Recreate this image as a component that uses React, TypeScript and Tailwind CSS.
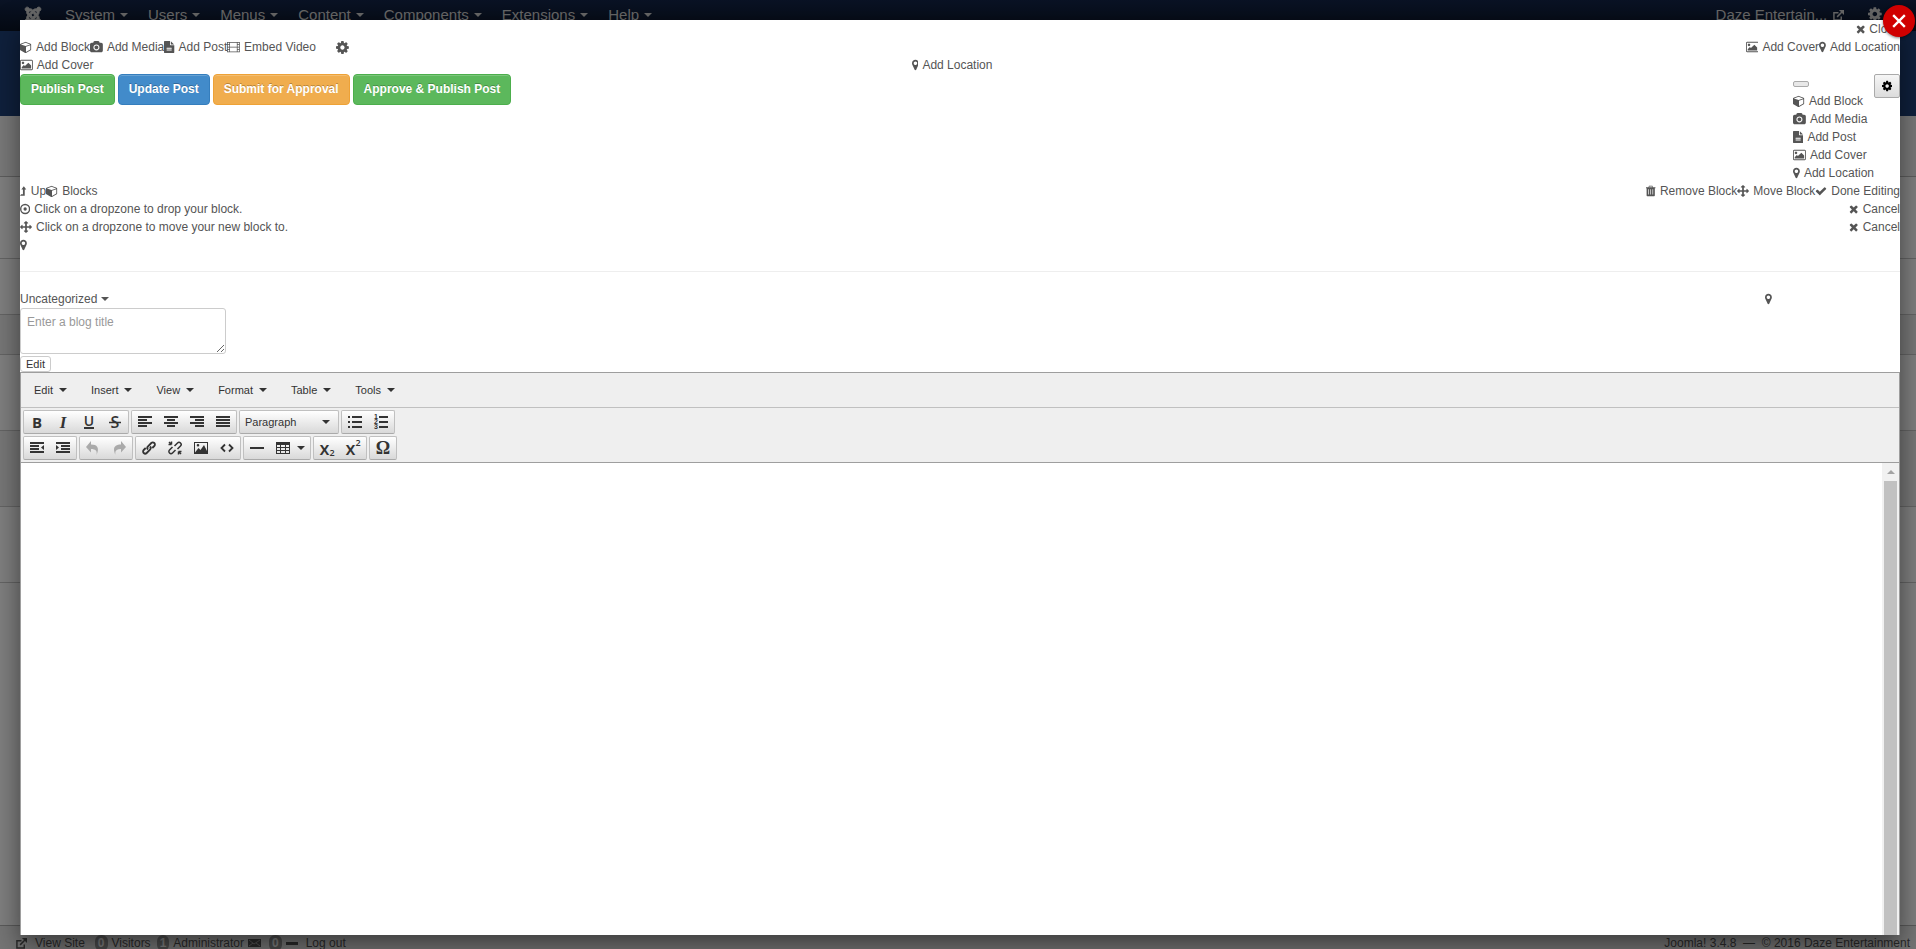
import type { ReactNode } from 'react';
import { FaJoomla } from 'react-icons/fa';

const glyphs = {
  cube: {
    box: '0 0 1792 1792',
    d: 'M896 1629l640-349v-636l-640 233v752zm-64-865l698-254-698-254-698 254zm832-252v768q0 35-18 65t-49 47l-704 384q-28 16-61 16t-61-16l-704-384q-31-17-49-47t-18-65v-768q0-40 23-73t61-47l704-256q22-8 44-8t44 8l704 256q38 14 61 47t23 73z',
  },
  camera: {
    box: '0 0 1920 1792',
    d: 'M960 672q119 0 203.500 84.500t84.500 203.500-84.500 203.500-203.500 84.500-203.500-84.500-84.500-203.500 84.500-203.500 203.500-84.500zm704-416q106 0 181 75t75 181v896q0 106-75 181t-181 75h-1408q-106 0-181-75t-75-181v-896q0-106 75-181t181-75h224l51-136q19-49 69.500-84.500t103.500-35.500h512q53 0 103.500 35.500t69.500 84.500l51 136h224zm-704 1152q185 0 316.500-131.500t131.500-316.500-131.500-316.500-316.500-131.500-316.500 131.500-131.500 316.500 131.500 316.500 316.500 131.500z',
  },
  file: {
    box: '128 0 1536 1792',
    d: 'M1596 476q14 14 28 36h-472v-472q22 14 36 28zm-476 164h544v1056q0 40-28 68t-68 28h-1344q-40 0-68-28t-28-68v-1600q0-40 28-68t68-28h800v544q0 40 28 68t68 28zm160 736v-64q0-14-9-23t-23-9h-704q-14 0-23 9t-9 23v64q0 14 9 23t23 9h704q14 0 23-9t9-23zm0-256v-64q0-14-9-23t-23-9h-704q-14 0-23 9t-9 23v64q0 14 9 23t23 9h704q14 0 23-9t9-23z',
  },
  film: {
    box: '0 0 1920 1792',
    d: 'M0 160h1920v1536h-1920zM110 270v210h230v-210zM110 600v260h230v-260zM110 980v260h230v-260zM110 1360v220h230v-220zM450 270v590h1020v-590zM450 980v600h1020v-600zM1580 270v210h230v-210zM1580 600v260h230v-260zM1580 980v260h230v-260zM1580 1360v220h230v-220z',
  },
  picture: {
    box: '0 0 1920 1792',
    d: 'M640 576q0 80-56 136t-136 56-136-56-56-136 56-136 136-56 136 56 56 136zm1024 384v448h-1408v-192l320-320 160 160 512-512zm96-704h-1600q-13 0-22.500 9.500t-9.500 22.500v1216q0 13 9.500 22.500t22.500 9.500h1600q13 0 22.500-9.500t9.500-22.500v-1216q0-13-9.500-22.500t-22.500-9.500zm160 32v1216q0 66-47 113t-113 47h-1600q-66 0-113-47t-47-113v-1216q0-66 47-113t113-47h1600q66 0 113 47t47 113z',
  },
  marker: {
    box: '384 0 1024 1792',
    d: 'M1152 640q0-106-75-181t-181-75-181 75-75 181 75 181 181 75 181-75 75-181zm256 0q0 109-33 179l-364 774q-16 33-47.500 52t-67.500 19-67.500-19-46.500-52l-365-774q-33-70-33-179 0-212 150-362t362-150 362 150 150 362z',
  },
  gear: {
    box: '128 0 1536 1792',
    d: 'M1152 896q0-106-75-181t-181-75-181 75-75 181 75 181 181 75 181-75 75-181zm512-109v222q0 12-8 23t-20 13l-185 28q-19 54-39 91 35 50 107 138 10 12 10 25t-9 23q-27 37-99 108t-94 71q-12 0-26-9l-138-108q-44 23-91 38-16 136-29 186-7 28-36 28h-222q-14 0-24.500-8.500t-11.500-21.500l-28-184q-49-16-90-37l-141 107q-10 9-25 9-14 0-25-11-126-114-165-168-7-10-7-23 0-12 8-23 15-21 51-66.500t54-70.500q-27-50-41-99l-183-27q-13-2-21-12.500t-8-23.500v-222q0-12 8-23t19-13l186-28q14-46 39-92-40-57-107-138-10-12-10-24 0-10 9-23 26-36 98.500-107.500t94.500-71.500q13 0 26 10l138 107q44-23 91-38 16-136 29-186 7-28 36-28h222q14 0 24.500 8.500t11.500 21.500l28 184q49 16 90 37l142-107q9-9 24-9 13 0 25 10 129 119 165 170 7 8 7 22 0 12-8 23-15 21-51 66.500t-54 70.500q26 50 41 98l183 28q13 2 21 12.500t8 23.500z',
  },
  times: {
    box: '192 0 1408 1792',
    d: 'M1490 1322q0 40-28 68l-136 136q-28 28-68 28t-68-28l-294-294-294 294q-28 28-68 28t-68-28l-136-136q-28-28-28-68t28-68l294-294-294-294q-28-28-28-68t28-68l136-136q28-28 68-28t68 28l294 294 294-294q28-28 68-28t68 28l136 136q28 28 28 68t-28 68l-294 294 294 294q28 28 28 68z',
  },
  check: {
    box: '0 0 1792 1792',
    d: 'M1671 566q0 40-28 68l-724 724-136 136q-28 28-68 28t-68-28l-136-136-362-362q-28-28-28-68t28-68l136-136q28-28 68-28t68 28l294 295 656-657q28-28 68-28t68 28l136 136q28 28 28 68z',
  },
  arrows: {
    box: '0 0 1792 1792',
    d: 'M1792 896q0 26-19 45l-256 256q-19 19-45 19t-45-19-19-45v-128h-384v384h128q26 0 45 19t19 45-19 45l-256 256q-19 19-45 19t-45-19l-256-256q-19-19-19-45t19-45 45-19h128v-384h-384v128q0 26-19 45t-45 19-45-19l-256-256q-19-19-19-45t19-45l256-256q19-19 45-19t45 19 19 45v128h384v-384h-128q-26 0-45-19t-19-45 19-45l256-256q19-19 45-19t45 19l256 256q19 19 19 45t-19 45-45 19h-128v384h384v-128q0-26 19-45t45-19 45 19l256 256q19 19 19 45z',
  },
  trash: {
    box: '192 0 1408 1792',
    d: 'M640 128h512l80 200h368v150h-90v1100q0 90-110 90h-1008q-110 0-110-90v-1100h-90v-150h368zM700 230l-40 98h472l-40-98zM530 620h100v800h-100zM845 620h100v800h-100zM1160 620h100v800h-100z',
  },
  up: {
    box: '0 0 1024 1792',
    d: 'M0 1600l170-210h270v-710h-240l370-500 370 500h-230v920z',
  },
  target: {
    box: '128 0 1536 1792',
    d: 'M896 128a768 768 0 1 0 0 1536a768 768 0 1 0 0-1536zM896 340a556 556 0 1 1 0 1112a556 556 0 1 1 0-1112zM896 650a246 246 0 1 0 0 492a246 246 0 1 0 0-492z',
  },
};

type GlyphName = keyof typeof glyphs;

function Glyph({ name, className = 'h-3' }: { name: GlyphName; className?: string }) {
  const { box, d } = glyphs[name];
  return (
    <svg viewBox={box} fill="currentColor" fillRule="evenodd" className={`${className} w-auto shrink-0`}>
      <path d={d} />
    </svg>
  );
}

function Action({ icon, children }: { icon: GlyphName; children?: ReactNode }) {
  return (
    <button type="button" className="inline-flex items-center gap-1 whitespace-nowrap">
      <Glyph name={icon} />
      {children}
    </button>
  );
}

function Caret() {
  return (
    <svg viewBox="0 0 8 4" fill="currentColor" className="h-1 w-2 shrink-0">
      <path d="M0 0h8L4 4z" />
    </svg>
  );
}

function ExternalLink() {
  return (
    <svg viewBox="0 0 12 12" fill="none" stroke="currentColor" strokeWidth="1.6" className="size-[11px] shrink-0">
      <path d="M6 3H1v8h8V7M4.500 7.500L10 2" />
      <path d="M6.500 0H12v5.500z" fill="currentColor" stroke="none" />
    </svg>
  );
}

const navItems = ['System', 'Users', 'Menus', 'Content', 'Components', 'Extensions', 'Help'];

function AdminPage() {
  return (
    <div className="flex h-full flex-col bg-white">
      <nav className="flex h-[31px] shrink-0 items-start bg-linear-to-b from-[#14264a] to-[#0a1426] pl-6 text-[15px] leading-[30px] text-[#d0d0d0]">
        <a href="#home" aria-label="Home" className="mr-[13px] pt-1.5">
          <FaJoomla className="size-[18px]" stroke="currentColor" strokeWidth="26" />
        </a>
        {navItems.map((item) => (
          <a key={item} href={`#${item}`} className="flex items-center gap-[5px] px-2.5">
            {item}
            <Caret />
          </a>
        ))}
        <a href="#site" className="ml-auto flex items-center gap-1.5">
          Daze Entertain...
          <ExternalLink />
        </a>
        <a href="#settings" aria-label="Settings" className="mr-[34px] ml-6 pt-1.5">
          <Glyph name="gear" className="h-4" />
        </a>
      </nav>
      <div className="h-[85px] shrink-0 bg-[#1f4078]" />
      <div className="h-[61px] shrink-0 border-b border-[#bbb] bg-[#f2f2f2]" />
      <div className="h-[82px] shrink-0 border-b border-[#c8c8c8]" />
      <div className="h-14 shrink-0 border-b border-[#c8c8c8]" />
      <div className="h-10 shrink-0 border-b border-[#c8c8c8] bg-[#eee]" />
      <div className="h-[76px] shrink-0 border-b border-[#c8c8c8]" />
      <div className="h-[76px] shrink-0 border-b border-[#c8c8c8] bg-[#eee]" />
      <div className="h-[76px] shrink-0 border-b border-[#c8c8c8]" />
      <div className="flex-1" />
      <footer className="flex h-6 shrink-0 justify-between border-t border-[#b5b5b5] bg-[#ebebeb] px-1.5 pt-2 text-xs leading-[18px] whitespace-nowrap text-[#555]">
        <div className="flex h-[18px] items-center pl-2.5">
          <ExternalLink />
          <a href="#view" className="ml-2">
            View Site
          </a>
          <span className="mr-1 ml-2.5 rounded-md bg-[#999] px-[3px] leading-4 font-bold text-white">0</span>
          Visitors
          <span className="mr-1 ml-1.5 rounded-md bg-[#999] px-[3px] leading-4 font-bold text-white">1</span>
          Administrator
          <svg viewBox="0 0 13 8" className="mr-2 ml-1 h-2 w-[13px]">
            <path d="M0 0h13v8H0z" fill="currentColor" />
            <path d="M1 1l5 4 6-4M1 7l4-3M12 7L8 4" stroke="#ccc" strokeWidth=".7" fill="none" />
          </svg>
          <span className="mr-1 rounded-md bg-[#999] px-[3px] leading-4 font-bold text-white">0</span>
          <span className="mr-2 h-[3px] w-3 bg-[#555]" />
          <a href="#logout">Log out</a>
        </div>
        <p>Joomla! 3.4.8 &nbsp;—&nbsp; © 2016 Daze Entertainment</p>
      </footer>
    </div>
  );
}

const postButtons = [
  { label: 'Publish Post', style: 'bg-[#5cb85c] border-[#4cae4c]' },
  { label: 'Update Post', style: 'bg-[#428bca] border-[#357ebd]' },
  { label: 'Submit for Approval', style: 'bg-[#f0ad4e] border-[#eea236]' },
  { label: 'Approve & Publish Post', style: 'bg-[#5cb85c] border-[#4cae4c]' },
];

function ComposerHeader() {
  return (
    <div className="text-xs leading-[18px] text-[#555]">
      <div className="flex justify-end">
        <Action icon="times">Close</Action>
      </div>
      <div className="flex justify-between">
        <div className="flex">
          <Action icon="cube">Add Block</Action>
          <Action icon="camera">Add Media</Action>
          <Action icon="file">Add Post</Action>
          <Action icon="film">Embed Video</Action>
          <button type="button" aria-label="Post settings" className="ml-5">
            <Glyph name="gear" className="h-[15px]" />
          </button>
        </div>
        <div className="flex">
          <Action icon="picture">Add Cover</Action>
          <Action icon="marker">Add Location</Action>
        </div>
      </div>
      <div className="grid grid-cols-[1fr_auto_1fr] pr-4">
        <div className="flex">
          <Action icon="picture">Add Cover</Action>
        </div>
        <Action icon="marker">Add Location</Action>
      </div>
      <div className="flex items-start justify-between">
        <div className="flex gap-[3px]">
          {postButtons.map(({ label, style }) => (
            <button
              key={label}
              type="button"
              className={`rounded border px-2.5 py-1.5 leading-[17px] font-bold text-white inset-shadow-[0_1px_0_rgba(255,255,255,0.2)] text-shadow-[0_-1px_0_rgba(0,0,0,0.25)] ${style}`}
            >
              {label}
            </button>
          ))}
        </div>
        <div className="flex items-start">
          <div className="flex flex-col items-start">
            <div className="flex h-[18px] items-center pt-0.5">
              <button
                type="button"
                aria-label="Toggle menu"
                className="h-1.5 w-4 rounded-xs border border-[#aaa] bg-[#e8e8e8]"
              />
            </div>
            <Action icon="cube">Add Block</Action>
            <Action icon="camera">Add Media</Action>
            <Action icon="file">Add Post</Action>
            <Action icon="picture">Add Cover</Action>
            <Action icon="marker">Add Location</Action>
          </div>
          <button
            type="button"
            aria-label="Options"
            className="flex h-6 w-[26px] items-center justify-center rounded-xs border border-[#aaa] bg-linear-to-b from-[#f6f6f6] to-[#dcdcdc] text-black"
          >
            <Glyph name="gear" />
          </button>
        </div>
      </div>
      <div className="flex justify-between">
        <div className="flex">
          <Action icon="up">Up</Action>
          <Action icon="cube">Blocks</Action>
        </div>
        <div className="flex">
          <Action icon="trash">Remove Block</Action>
          <Action icon="arrows">Move Block</Action>
          <Action icon="check">Done Editing</Action>
        </div>
      </div>
      <div className="flex justify-between">
        <p className="flex items-center gap-1">
          <Glyph name="target" />
          Click on a dropzone to drop your block.
        </p>
        <Action icon="times">Cancel</Action>
      </div>
      <div className="flex justify-between">
        <p className="flex items-center gap-1">
          <Glyph name="arrows" />
          Click on a dropzone to move your new block to.
        </p>
        <Action icon="times">Cancel</Action>
      </div>
      <div className="flex h-[18px] items-center">
        <Glyph name="marker" />
      </div>
      <hr className="mt-[17px] mb-[18px] border-[#eee]" />
      <div className="flex justify-between pr-32">
        <button type="button" className="flex items-center gap-1">
          Uncategorized
          <Caret />
        </button>
        <Glyph name="marker" className="my-auto h-3" />
      </div>
      <textarea
        aria-label="Blog title"
        placeholder="Enter a blog title"
        className="mb-0.5 block h-[46px] w-[206px] rounded-[3px] border border-[#ccc] px-1.5 py-1 placeholder:text-[#999]"
      />
      <button
        type="button"
        className="block h-4 rounded-[3px] border border-[#ccc] px-[5px] text-[11px] leading-[14px] text-[#333]"
      >
        Edit
      </button>
    </div>
  );
}

function Lines({ rows }: { rows: number[][] }) {
  return (
    <svg viewBox="0 0 16 16" stroke="currentColor" strokeWidth="2" className="size-4">
      {rows.map(([from, to], i) => (
        <path key={i} d={`M${from} ${3 + i * 3}H${to}`} />
      ))}
    </svg>
  );
}

function Stroke({ d, width = 1.5 }: { d: string; width?: number }) {
  return (
    <svg viewBox="0 0 16 16" fill="none" stroke="currentColor" strokeWidth={width} className="size-4">
      <path d={d} />
    </svg>
  );
}

function Fill({ d }: { d: string }) {
  return (
    <svg viewBox="0 0 16 16" fill="currentColor" fillRule="evenodd" className="size-4">
      <path d={d} />
    </svg>
  );
}

function Tool({ label, children, off = false }: { label: string; children: ReactNode; off?: boolean }) {
  return (
    <button
      type="button"
      aria-label={label}
      disabled={off}
      className="flex h-full min-w-[26px] items-center justify-center gap-1.5 px-[5px] text-base leading-none disabled:text-[#aaa]"
    >
      {children}
    </button>
  );
}

function Group({ children }: { children: ReactNode }) {
  return (
    <div className="flex h-6 rounded-xs border border-[#c0c0c0] border-b-[#aaa] bg-linear-to-b from-white to-[#d9d9d9]">
      {children}
    </div>
  );
}

const undoPath = 'M6 1v3.500c6 0 9 3 5.500 10.500c1-4-1-6-5.500-6V12.500L1 7z';

function Toolbar() {
  return (
    <div className="flex flex-col gap-0.5 border-b border-[#9e9e9e] bg-[#efefef] p-0.5 text-[#333]">
      <div className="flex gap-0.5">
        <Group>
          <Tool label="Bold">
            <b className="font-['Open_Sans',sans-serif] text-[15px]">B</b>
          </Tool>
          <Tool label="Italic">
            <i className="font-['Liberation_Serif',serif] text-[17px] font-bold">I</i>
          </Tool>
          <Tool label="Underline">
            <span className="border-b-2 font-['Open_Sans',sans-serif] text-sm leading-3 font-semibold">U</span>
          </Tool>
          <Tool label="Strikethrough">
            <Stroke d="M2 8.500h12" />
            <span className="-ml-[22px] w-4 text-center font-['Open_Sans',sans-serif] font-semibold">S</span>
          </Tool>
        </Group>
        <Group>
          <Tool label="Align left">
            <Lines rows={[[1, 15], [1, 10], [1, 15], [1, 10]]} />
          </Tool>
          <Tool label="Align center">
            <Lines rows={[[1, 15], [4, 12], [1, 15], [4, 12]]} />
          </Tool>
          <Tool label="Align right">
            <Lines rows={[[1, 15], [6, 15], [1, 15], [6, 15]]} />
          </Tool>
          <Tool label="Justify">
            <Lines rows={[[1, 15], [1, 15], [1, 15], [1, 15]]} />
          </Tool>
        </Group>
        <Group>
          <button type="button" className="flex w-[98px] items-center justify-between pr-2 pl-[5px] text-[11px]">
            Paragraph
            <Caret />
          </button>
        </Group>
        <Group>
          <Tool label="Bullet list">
            <Fill d="M1 2h2v2H1zM1 7h2v2H1zM1 12h2v2H1zM5 2h10v2H5zM5 7h10v2H5zM5 12h10v2H5z" />
          </Tool>
          <Tool label="Numbered list">
            <svg viewBox="0 0 16 16" fill="currentColor" className="size-4 font-['Liberation_Sans',sans-serif] text-[7px] font-bold">
              <text x="1" y="5">1</text>
              <text x="1" y="10">2</text>
              <text x="1" y="15">3</text>
              <path d="M6 2h9v2H6zM6 7h9v2H6zM6 12h9v2H6z" />
            </svg>
          </Tool>
        </Group>
      </div>
      <div className="flex gap-0.5">
        <Group>
          <Tool label="Decrease indent">
            <Fill d="M1 2h14v2H1zM1 5h9v2H1zM1 8h9v2H1zM1 11h14v2H1zM15 5v5l-3-2.500z" />
          </Tool>
          <Tool label="Increase indent">
            <Fill d="M1 2h14v2H1zM6 5h9v2H6zM6 8h9v2H6zM1 11h14v2H1zM1 5v5l3-2.500z" />
          </Tool>
        </Group>
        <Group>
          <Tool label="Undo" off>
            <Fill d={undoPath} />
          </Tool>
          <Tool label="Redo" off>
            <span className="-scale-x-100">
              <Fill d={undoPath} />
            </span>
          </Tool>
        </Group>
        <Group>
          <Tool label="Insert link">
            <Stroke d="M7 9.500a2.300 2.300 0 0 1 0-3.200l3.300-3.300a2 2 0 0 1 3 3l-2 2M9 6.500a2.300 2.300 0 0 1 0 3.200l-3.300 3.300a2 2 0 0 1-3-3l2-2" width={1.8} />
          </Tool>
          <Tool label="Remove link">
            <Stroke d="M7.500 6l3-3a2 2 0 0 1 3 3l-3 3M8.500 10l-3 3a2 2 0 0 1-3-3l3-3M4.500 1.500v3M1.500 4.500h3M11.500 14.500v-3M14.500 11.500h-3M2 2l2.500 2.500M14 14l-2.500-2.500" />
          </Tool>
          <Tool label="Insert image">
            <Fill d="M1 2h14v12H1zM2 3v9.500l3.500-4.500 2 2 3.500-5 3 6V3zM5 4a1.300 1.300 0 1 1 0 2.600a1.300 1.300 0 1 1 0-2.600z" />
          </Tool>
          <Tool label="Source code">
            <Stroke d="M6 4.500L2.500 8 6 11.500M10 4.500l3.500 3.500L10 11.500" width={1.8} />
          </Tool>
        </Group>
        <Group>
          <Tool label="Horizontal line">
            <Stroke d="M1 8h14" width={2} />
          </Tool>
          <Tool label="Table">
            <Fill d="M1 2h14v12H1zM2 5v2h3V5zM6 5v2h4V5zM11 5v2h3V5zM2 8v2h3V8zM6 8v2h4V8zM11 8v2h3V8zM2 11v2h3v-2zM6 11v2h4v-2zM11 11v2h3v-2z" />
            <Caret />
          </Tool>
        </Group>
        <Group>
          <Tool label="Subscript">
            <span className="flex items-end font-['Open_Sans',sans-serif] text-lg leading-4 font-semibold">
              x<small className="text-[9px] leading-[6px]">2</small>
            </span>
          </Tool>
          <Tool label="Superscript">
            <span className="flex items-start font-['Open_Sans',sans-serif] text-lg leading-4 font-semibold">
              x<small className="text-[9px] leading-[6px]">2</small>
            </span>
          </Tool>
        </Group>
        <Group>
          <Tool label="Special character">
            <span className="font-['Liberation_Serif',serif] text-lg leading-none font-bold">Ω</span>
          </Tool>
        </Group>
      </div>
    </div>
  );
}

function Editor() {
  return (
    <div className="flex flex-1 flex-col border border-b-0 border-[#9e9e9e]">
      <div className="flex h-[35px] shrink-0 items-center border-b border-[#c0c0c0] bg-[#efefef] pl-px text-[11px] text-[#333]">
        {['Edit', 'Insert', 'View', 'Format', 'Table', 'Tools'].map((menu) => (
          <button key={menu} type="button" className="flex items-center gap-1.5 px-3">
            {menu}
            <Caret />
          </button>
        ))}
      </div>
      <Toolbar />
      <div className="flex flex-1">
        <textarea aria-label="Post content" className="flex-1 resize-none outline-none" />
        <div className="flex w-[17px] flex-col items-center bg-[#f1f1f1]">
          <svg viewBox="0 0 8 4" className="my-[7px] h-1 w-2 shrink-0 text-[#a3a3a3]" fill="currentColor">
            <path d="M4 0l4 4H0z" />
          </svg>
          <div className="w-[13px] flex-1 bg-[#c1c1c1]" />
        </div>
      </div>
    </div>
  );
}

export default function App() {
  return (
    <div className="relative h-screen overflow-hidden font-['Liberation_Sans',Arial,sans-serif]">
      <AdminPage />
      <div className="absolute inset-0 bg-black/50" />
      <div
        role="dialog"
        aria-label="Compose post"
        className="absolute top-5 right-4 bottom-3.5 left-5 flex flex-col bg-white shadow-[0_10px_25px_rgba(0,0,0,0.5)]"
      >
        <ComposerHeader />
        <Editor />
        <button
          type="button"
          aria-label="Close window"
          className="absolute -top-[15px] -right-[15px] flex size-8 items-center justify-center rounded-full bg-[#d00000] text-white shadow-[0_1px_3px_rgba(0,0,0,0.5)]"
        >
          <svg viewBox="0 0 12 12" stroke="currentColor" strokeWidth="2" className="size-3.5">
            <path d="M1 1l10 10M11 1L1 11" />
          </svg>
        </button>
      </div>
    </div>
  );
}
